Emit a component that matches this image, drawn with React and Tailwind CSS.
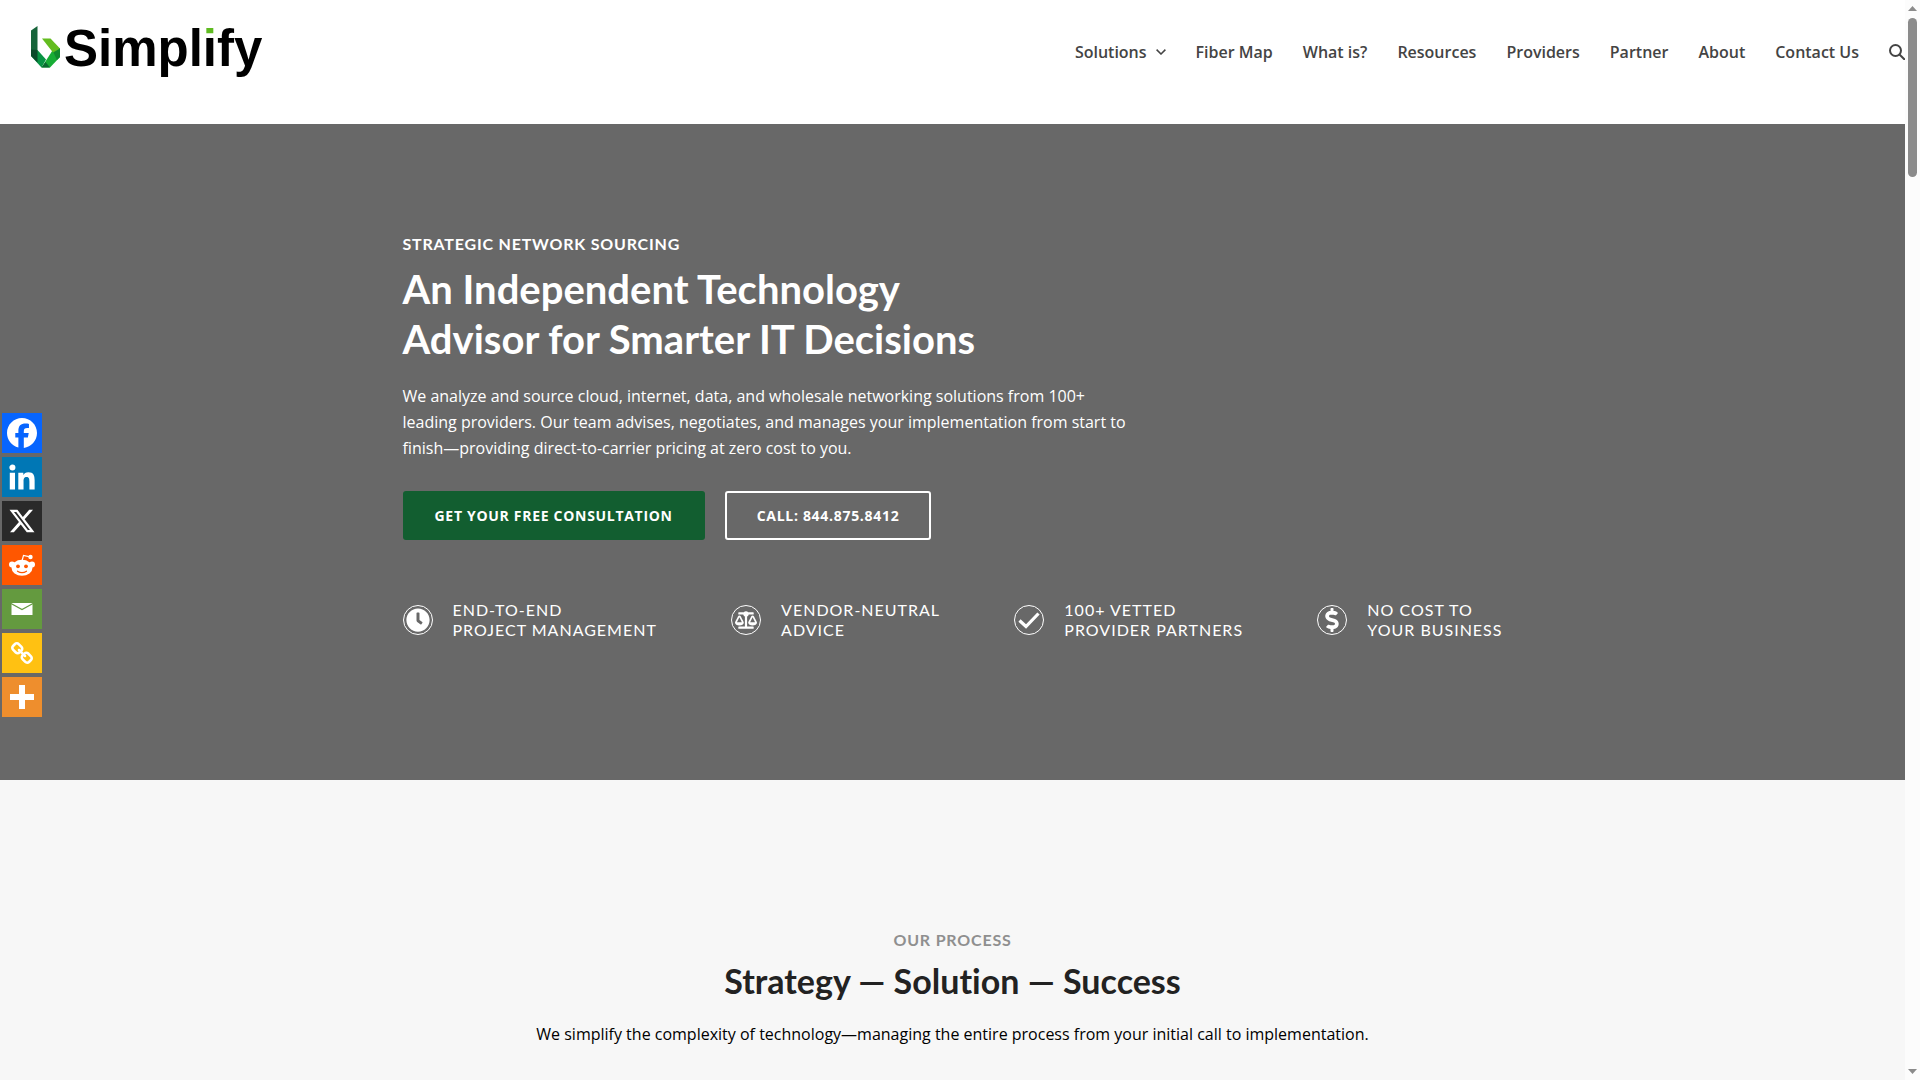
import { FaBalanceScale, FaClock, FaDollarSign } from 'react-icons/fa';

const navLinks = ['Fiber Map', 'What is?', 'Resources', 'Providers', 'Partner', 'About', 'Contact Us'];

const CheckIcon = () => (
  <svg viewBox="0 0 28 28" className="size-7" fill="none" stroke="#fff" strokeWidth="3.200">
    <path d="M4.500 14.500l6.500 6L23.500 7.500" />
  </svg>
);

const features = [
  { icon: <FaClock size={24} />, lines: ['End-to-End', 'Project Management'] },
  { icon: <FaBalanceScale size={22} />, lines: ['Vendor-Neutral', 'Advice'] },
  { icon: <CheckIcon />, lines: ['100+ Vetted', 'Provider Partners'] },
  { icon: <FaDollarSign size={24} />, lines: ['No Cost to', 'Your Business'] },
];

const socials = [
  {
    name: 'Facebook',
    color: 'bg-[#0765fe]',
    icon: (
      <svg viewBox="0 0 32 32" className="size-10" fill="#fff">
        <path d="M28 16c0-6.627-5.373-12-12-12S4 9.373 4 16c0 5.628 3.875 10.35 9.101 11.647v-7.98h-2.474V16H13.1v-1.58c0-4.085 1.849-5.978 5.859-5.978.76 0 2.072.15 2.608.298v3.325c-.283-.03-.775-.045-1.386-.045-1.967 0-2.728.745-2.728 2.683V16h3.92l-.673 3.667h-3.247v8.245C23.395 27.195 28 22.135 28 16Z" />
      </svg>
    ),
  },
  {
    name: 'LinkedIn',
    color: 'bg-[#0077b5]',
    icon: (
      <svg viewBox="0 0 32 32" className="size-10" fill="#fff">
        <path d="M6.227 12.61h4.19v13.48h-4.19V12.61zm2.095-6.7a2.43 2.43 0 0 1 0 4.86c-1.344 0-2.428-1.09-2.428-2.43s1.084-2.43 2.428-2.43m4.72 6.7h4.02v1.84h.058c.56-1.058 1.927-2.176 3.965-2.176 4.238 0 5.02 2.792 5.02 6.42v7.395h-4.183v-6.56c0-1.564-.03-3.574-2.178-3.574-2.18 0-2.514 1.7-2.514 3.46v6.668h-4.187V12.61z" />
      </svg>
    ),
  },
  {
    name: 'X',
    color: 'bg-[#2a2a2a]',
    icon: (
      <svg viewBox="0 0 32 32" className="size-10" fill="#fff">
        <path d="M21.751 7h3.067l-6.7 7.658L26 25.078h-6.172l-4.833-6.32-5.531 6.32h-3.07l7.167-8.19L6 7h6.328l4.37 5.777L21.75 7Zm-1.076 16.242h1.7L11.404 8.74H9.58l11.094 14.503Z" />
      </svg>
    ),
  },
  {
    name: 'Reddit',
    color: 'bg-[#ff5700]',
    icon: (
      <svg viewBox="0 0 40 40" className="size-10" fill="#fff">
        <ellipse cx="20" cy="22.800" rx="10.500" ry="8" />
        <circle cx="10" cy="19.500" r="3" />
        <circle cx="30" cy="19.500" r="3" />
        <circle cx="28.500" cy="12" r="2.200" />
        <path d="M20 16l1.500-5.600 6.500 1.500" fill="none" stroke="#fff" strokeWidth="1.200" />
        <circle cx="16" cy="21.300" r="1.900" fill="#ff5700" />
        <circle cx="24" cy="21.300" r="1.900" fill="#ff5700" />
        <path d="M15.500 26.200q4.500 3 9 0" fill="none" stroke="#ff5700" strokeWidth="1.200" strokeLinecap="round" />
      </svg>
    ),
  },
  {
    name: 'Email',
    color: 'bg-[#649a3f]',
    icon: (
      <svg viewBox="0 0 40 40" className="size-10">
        <path fill="#fff" d="M9.500 14h21v12h-21z" />
        <path fill="none" stroke="#649a3f" strokeWidth="1.200" d="M9 14.500l11 6 11-6" />
      </svg>
    ),
  },
  {
    name: 'Copy Link',
    color: 'bg-[#ffc112]',
    icon: (
      <svg viewBox="-4 -4 40 40" className="size-10" fill="#fff">
        <path d="M24.412 21.177c0-.36-.126-.665-.377-.917l-2.804-2.804a1.235 1.235 0 0 0-.913-.378c-.377 0-.7.144-.97.43.026.028.11.11.255.25.144.14.24.236.29.29s.117.14.2.256c.087.117.146.232.177.344.03.112.046.236.046.37 0 .36-.126.666-.377.918a1.25 1.25 0 0 1-.918.377 1.4 1.4 0 0 1-.373-.047 1.062 1.062 0 0 1-.345-.175 2.268 2.268 0 0 1-.256-.2 6.815 6.815 0 0 1-.29-.29c-.14-.142-.223-.23-.25-.254-.297.28-.445.607-.445.984 0 .36.126.664.377.916l2.778 2.79c.243.243.548.364.917.364.36 0 .665-.118.917-.35l1.982-1.97c.252-.25.378-.55.378-.9zm-9.477-9.504c0-.36-.126-.665-.377-.917l-2.777-2.79a1.235 1.235 0 0 0-.913-.378c-.35 0-.656.12-.917.364L7.967 9.92c-.254.252-.38.553-.38.903 0 .36.126.665.38.917l2.802 2.804c.242.243.547.364.916.364.377 0 .7-.14.97-.418-.026-.027-.11-.11-.255-.25s-.24-.235-.29-.29a2.675 2.675 0 0 1-.2-.255 1.052 1.052 0 0 1-.176-.344 1.396 1.396 0 0 1-.047-.37c0-.36.126-.662.377-.914.252-.252.557-.377.917-.377.136 0 .26.015.37.046.114.03.23.09.346.175.117.085.202.153.256.2.054.05.15.148.29.29.14.146.222.23.25.258.294-.278.442-.606.442-.983zM27 21.177c0 1.078-.382 1.99-1.146 2.736l-1.982 1.968c-.745.75-1.658 1.12-2.736 1.12-1.087 0-2.004-.38-2.75-1.143l-2.777-2.79c-.75-.747-1.12-1.66-1.12-2.737 0-1.106.392-2.046 1.183-2.818l-1.186-1.185c-.774.79-1.708 1.186-2.805 1.186-1.078 0-1.995-.376-2.75-1.13l-2.803-2.81C5.377 12.82 5 11.903 5 10.826c0-1.08.382-1.993 1.146-2.738L8.128 6.12C8.873 5.372 9.785 5 10.864 5c1.087 0 2.004.382 2.75 1.146l2.777 2.79c.75.747 1.12 1.66 1.12 2.737 0 1.105-.392 2.045-1.183 2.817l1.186 1.186c.774-.79 1.708-1.186 2.805-1.186 1.078 0 1.995.377 2.75 1.132l2.804 2.804c.754.755 1.13 1.672 1.13 2.75z" />
      </svg>
    ),
  },
  {
    name: 'More',
    color: 'bg-[#ee8e2d]',
    icon: (
      <svg viewBox="0 0 40 40" className="size-10" fill="#fff">
        <path d="M17 8h6v9h9v6h-9v9h-6v-9H8v-6h9z" />
      </svg>
    ),
  },
];

const Logo = () => (
  <a href="#home" className="flex items-start text-black">
    <svg viewBox="0 0 29 42" className="mt-[26px] h-[42px] w-[29px]">
      <path fill="#17643a" d="M0 4.500L6.500 0v24L0 30z" />
      <path fill="#089444" d="M6.500 24L15 33.500 10.500 41.500 0 30z" />
      <path fill="#0a4a2a" d="M0 23.500L6.500 24v12.500L0 30z" />
      <path fill="#17ad35" d="M21.500 24.500L29 22v9L19 41.500h-8.500z" />
      <path fill="#0a6a30" d="M14.500 36l4.500 5.500h-8.500z" />
      <path fill="#0f8a2c" d="M21.500 24.500L29 22v9l-3 3z" />
      <path fill="#63bc1f" d="M11 12.500h8.500L29 22.500l-7 4z" />
    </svg>
    {/* the second i has a green dot on a black stem */}
    <span className="ml-1 mt-[19px] font-['Liberation_Sans'] text-[51px] leading-[60px] font-bold">
      Simpl<span className="bg-[linear-gradient(#5fbb20_17px,#000_17px)] bg-clip-text text-transparent">i</span>fy
    </span>
  </a>
);

const Header = () => (
  <header className="flex h-[124px] items-start justify-between bg-white pl-[31px]">
    <Logo />
    <nav className="flex h-[104px] items-center gap-[30px] font-['Open_Sans'] text-base font-semibold text-[#444]">
      <a href="#solutions" className="flex items-center gap-[9px]">
        Solutions
        <svg viewBox="0 0 10 6" className="h-[6px] w-[10px]" fill="none" stroke="currentColor" strokeWidth="1.500">
          <path d="M0.600 0.600L5 5 9.400 0.600" />
        </svg>
      </a>
      {navLinks.map((link) => (
        <a key={link} href={`#${link}`}>{link}</a>
      ))}
      <button type="button" aria-label="Search">
        <svg viewBox="0 0 16 16" className="size-4" fill="none" stroke="currentColor" strokeWidth="2">
          <circle cx="6.500" cy="6.500" r="5.500" />
          <path d="M10.500 10.500L16 16" />
        </svg>
      </button>
    </nav>
  </header>
);

const Hero = () => (
  <section className="bg-[#686868] px-6 pt-[108px] pb-[140px] text-white">
    <div className="mx-auto max-w-[1100px]">
      <p className="font-['Lato'] text-base leading-6 font-bold tracking-wider uppercase">Strategic Network Sourcing</p>
      <h1 className="mt-2 font-['Lato'] text-[40px] leading-[50px] font-bold [font-variant-ligatures:none]">
        An Independent Technology
        <br />
        Advisor for Smarter IT Decisions
      </h1>
      <p className="mt-[19px] max-w-[730px] font-['Open_Sans'] text-base leading-[26px]">
        We analyze and source cloud, internet, data, and wholesale networking solutions from 100+ leading
        providers. Our team advises, negotiates, and manages your implementation from start to
        finish—providing direct-to-carrier pricing at zero cost to you.
      </p>
      <div className="mt-[30px] flex gap-5 font-['Open_Sans'] text-sm leading-[49px] font-bold tracking-wider uppercase">
        <a href="#consultation" className="rounded-[3px] bg-[#125e30] px-8">Get Your Free Consultation</a>
        <a href="tel:8448758412" className="rounded-[3px] border-2 border-white px-[30px] leading-[45px]">Call: 844.875.8412</a>
      </div>
      <ul className="mt-[60px] flex justify-between font-['Lato'] text-base leading-5 tracking-[1px] uppercase">
        {features.map((f) => (
          <li key={f.lines[0]} className="flex items-center gap-5">
            <span className="flex size-[30px] items-center justify-center rounded-full border border-white">{f.icon}</span>
            <span>
              {f.lines[0]}
              <br />
              {f.lines[1]}
            </span>
          </li>
        ))}
      </ul>
    </div>
  </section>
);

const Process = () => (
  <section className="flex-1 px-6 pt-[148px] text-center text-[#222]">
    <p className="font-['Lato'] text-base leading-6 font-bold tracking-wider text-[#8f8f8f] uppercase">Our Process</p>
    <h2 className="mt-2 font-['Lato'] text-[34px] leading-[42px] font-bold [font-variant-ligatures:none]">Strategy — Solution — Success</h2>
    <p className="mt-[19px] font-['Open_Sans'] text-base leading-[26px] text-black">
      We simplify the complexity of technology—managing the entire process from your initial call to implementation.
    </p>
  </section>
);

const SocialBar = () => (
  <div className="fixed top-[413px] left-[2px] flex flex-col gap-1">
    {socials.map((s) => (
      <a key={s.name} href={`#${s.name}`} aria-label={s.name} className={`flex size-10 items-center justify-center text-white ${s.color}`}>
        {s.icon}
      </a>
    ))}
  </div>
);

const ScrollTrack = () => (
  <div className="fixed inset-y-0 right-0 flex w-[15px] flex-col items-center bg-[#fcfcfc] py-[6px]">
    <svg viewBox="0 0 9 5" className="h-[5px] w-[9px]" fill="#8b8b8b"><path d="M0 5L4.500 0 9 5z" /></svg>
    <div className="mt-[7px] h-[159px] w-[9px] rounded-full bg-[#8b8b8b]" />
    <svg viewBox="0 0 9 5" className="mt-auto h-[5px] w-[9px]" fill="#8b8b8b"><path d="M0 0h9L4.500 5z" /></svg>
  </div>
);

export default function App() {
  return (
    <div className="flex min-h-screen flex-col bg-[#f7f7f7] pr-[15px]">
      <Header />
      <Hero />
      <Process />
      <SocialBar />
      <ScrollTrack />
    </div>
  );
}
